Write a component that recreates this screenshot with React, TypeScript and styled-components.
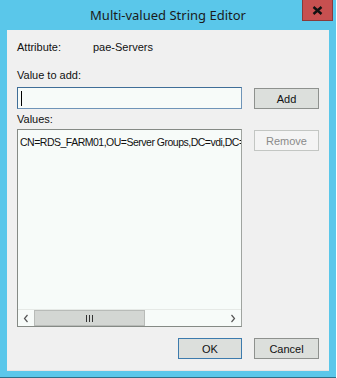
import React from 'react'
import styled, { createGlobalStyle } from 'styled-components'

const GlobalStyle = createGlobalStyle`
  html, body {
    margin: 0;
    padding: 0;
    background: #ffffff;
  }
  * {
    box-sizing: border-box;
  }
`

const StyledWindow = styled.div`
  width: 336px;
  height: 378px;
  background: #5ac7ea;
  border-bottom: 1px solid #2d6f88;
  display: flex;
  flex-direction: column;
  font-family: 'Liberation Sans', Arial, sans-serif;
  font-size: 11px;
  color: #111;
`

const StyledTitleBar = styled.div`
  height: 30px;
  display: grid;
  grid-template-columns: 1fr auto 1fr;
  align-items: start;
`

const StyledTitle = styled.div`
  grid-column: 2;
  padding-top: 6px;
  font-family: 'Noto Sans', 'Open Sans', sans-serif;
  font-size: 13px;
  line-height: 18px;
  color: #1b1b1b;
  white-space: nowrap;
`

const StyledClose = styled.div`
  grid-column: 3;
  justify-self: end;
  margin-right: 3px;
  width: 31px;
  height: 21px;
  background: #c75050;
  border: 1px solid #8a3a3a;
  border-top: none;
  display: flex;
  align-items: center;
  justify-content: center;
`

const StyledClient = styled.div`
  margin-left: 7px;
  width: 322px;
  height: 341px;
  background: #f0f0f0;
  border-bottom: 1px solid #e4e4e4;
  padding: 10px 10px 0 10px;
  display: flex;
  flex-direction: column;
`

const StyledRow = styled.div<{ $top: number }>`
  margin-top: ${(p) => p.$top}px;
  display: flex;
  align-items: center;
  height: 14px;
  line-height: 14px;
`

const StyledLabel = styled.span<{ $width?: number }>`
  width: ${(p) => (p.$width ? `${p.$width}px` : 'auto')};
  white-space: nowrap;
`

const StyledFieldRow = styled.div<{ $top: number }>`
  margin-top: ${(p) => p.$top}px;
  display: grid;
  grid-template-columns: 225px 1fr;
  align-items: start;
`

const StyledInput = styled.div`
  height: 22px;
  border: 1px solid #3f6e98;
  border-right-color: #6f94b8;
  border-bottom-color: #6f94b8;
  background: #f7fbf9;
  padding: 3px 0 0 3px;
`

const StyledCaret = styled.span`
  display: block;
  width: 1px;
  height: 15px;
  background: #000;
`

const StyledButton = styled.div<{ $disabled?: boolean; $default?: boolean; $width?: number }>`
  justify-self: end;
  width: ${(p) => p.$width ?? 65}px;
  height: 21px;
  margin-top: 1px;
  display: flex;
  align-items: center;
  justify-content: center;
  background: ${(p) => (p.$disabled ? '#f4f4f4' : '#dcdfdc')};
  border: 1px solid
    ${(p) => (p.$default ? '#3d7bad' : p.$disabled ? '#c3c6c3' : '#8e918e')};
  color: ${(p) => (p.$disabled ? '#8a8a8a' : '#111')};
  font-size: 11px;
`

const StyledList = styled.div`
  height: 198px;
  border: 1px solid #858a85;
  border-right-color: #a0a4a0;
  background: #f7fbf9;
  display: flex;
  flex-direction: column;
  overflow: hidden;
`

const StyledListItems = styled.div`
  flex: 1;
  padding: 5px 0 0 2px;
  font-size: 10.5px;
  line-height: 14px;
  letter-spacing: -0.5px;
  white-space: nowrap;
  overflow: hidden;
`

const StyledScrollBar = styled.div`
  height: 17px;
  display: flex;
  background: #f7fbf9;
  border-top: 1px solid #e6e9e6;
`

const StyledArrow = styled.div`
  width: 16px;
  display: flex;
  align-items: center;
  justify-content: center;
  background: #f7fbf9;
`

const StyledTrack = styled.div`
  flex: 1;
  display: flex;
`

const StyledThumb = styled.div<{ $width: number }>`
  width: ${(p) => p.$width}px;
  background: #d3d6d3;
  border: 1px solid #b8bbb8;
  display: flex;
  align-items: center;
  justify-content: center;
`

const StyledFooter = styled.div`
  margin-top: 10px;
  display: flex;
  justify-content: flex-end;
  gap: 12px;
`

const Chevron: React.FC<{ dir: 'left' | 'right' }> = ({ dir }) => (
  <svg width="6" height="9" viewBox="0 0 6 9">
    <path
      d={dir === 'left' ? 'M4.5 1 L1.5 4.5 L4.5 8' : 'M1.5 1 L4.5 4.5 L1.5 8'}
      fill="none"
      stroke="#555"
      strokeWidth="1.2"
    />
  </svg>
)

export default function App() {
  return (
    <>
      <GlobalStyle />
      <StyledWindow>
        <StyledTitleBar>
          <StyledTitle>Multi-valued String Editor</StyledTitle>
          <StyledClose>
            <svg width="11" height="9" viewBox="0 0 11 9">
              <path d="M1.5 1 L9.5 8 M9.5 1 L1.5 8" stroke="#111" strokeWidth="2.4" />
            </svg>
          </StyledClose>
        </StyledTitleBar>
        <StyledClient>
          <StyledRow $top={0}>
            <StyledLabel $width={76}>Attribute:</StyledLabel>
            <StyledLabel>pae-Servers</StyledLabel>
          </StyledRow>
          <StyledRow $top={14}>
            <StyledLabel>Value to add:</StyledLabel>
          </StyledRow>
          <StyledFieldRow $top={5}>
            <StyledInput>
              <StyledCaret />
            </StyledInput>
            <StyledButton>Add</StyledButton>
          </StyledFieldRow>
          <StyledRow $top={3}>
            <StyledLabel>Values:</StyledLabel>
          </StyledRow>
          <StyledFieldRow $top={3}>
            <StyledList>
              <StyledListItems>CN=RDS_FARM01,OU=Server Groups,DC=vdi,DC=</StyledListItems>
              <StyledScrollBar>
                <StyledArrow>
                  <Chevron dir="left" />
                </StyledArrow>
                <StyledTrack>
                  <StyledThumb $width={111}>
                    <svg width="7" height="7" viewBox="0 0 7 7">
                      <path d="M0.5 0 V7 M3.5 0 V7 M6.5 0 V7" stroke="#333" strokeWidth="1" />
                    </svg>
                  </StyledThumb>
                </StyledTrack>
                <StyledArrow>
                  <Chevron dir="right" />
                </StyledArrow>
              </StyledScrollBar>
            </StyledList>
            <StyledButton $disabled>Remove</StyledButton>
          </StyledFieldRow>
          <StyledFooter>
            <StyledButton $default $width={64}>OK</StyledButton>
            <StyledButton>Cancel</StyledButton>
          </StyledFooter>
        </StyledClient>
      </StyledWindow>
    </>
  )
}
